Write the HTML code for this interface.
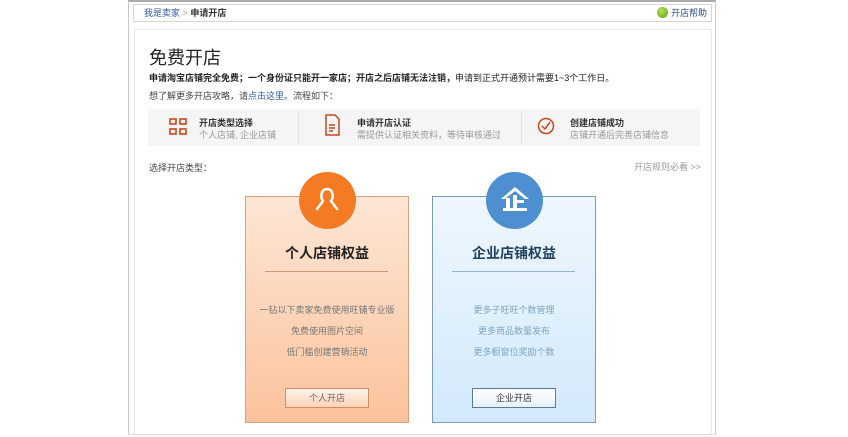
<!DOCTYPE html>
<html><head><meta charset="utf-8"><style>
*{margin:0;padding:0;box-sizing:border-box}
body{width:848px;height:437px;background:#fff;font-family:"Liberation Sans","Noto Sans CJK SC",sans-serif;position:relative;overflow:hidden;color:#333}
.a{position:absolute}
.frame{left:128px;top:0;width:588px;height:435px;border:1px solid #c8c8c8;border-top:2px solid #aaa;border-bottom:1px solid #ddd}
.bc{left:133px;top:4px;width:579px;height:18px;border:1px solid #d5d5d5;font-size:9px;line-height:16px;padding-left:10px}
.panel{left:134px;top:29px;width:578px;height:406px;border:1px solid #e6e6e6;border-bottom:none}
.steps{left:148px;top:109px;width:552px;height:37px;background:#f5f5f5}
.card{top:196px;width:164px;height:227px;border:1px solid #d9a07c}
.t{font-size:9px;white-space:nowrap}
</style></head><body>
<div class="a frame"></div>
<div class="a bc"><span style="color:#2c5f9e">我是卖家</span> <span style="color:#999">&gt;</span> <b>申请开店</b></div>
<div class="a" style="left:657px;top:7px;width:11px;height:11px;border-radius:50%;background:radial-gradient(circle at 40% 35%,#b6e35a,#5a9a10)"></div>
<div class="a t" style="left:671px;top:6px;color:#2c4f7e">开店帮助</div>
<div class="a panel"></div>
<div class="a" style="left:149px;top:44px;font-size:18px;color:#222">免费开店</div>
<div class="a t" style="left:149px;top:71px;color:#222"><b>申请淘宝店铺完全免费；一个身份证只能开一家店；开店之后店铺无法注销，</b>申请到正式开通预计需要1~3个工作日。</div>
<div class="a t" style="left:149px;top:89px;color:#444">想了解更多开店攻略，请<span style="color:#2c5f9e">点击这里</span>。流程如下：</div>
<div class="a steps"></div>
<div class="a" style="left:298px;top:111px;width:1px;height:33px;background:#e2e2e2"></div>
<div class="a" style="left:521px;top:111px;width:1px;height:33px;background:#e2e2e2"></div>
<svg class="a" style="left:169px;top:118px" width="20" height="18" viewBox="0 0 20 18" fill="none" stroke="#c8461b" stroke-width="1.6"><rect x="1" y="1" width="6" height="5"/><rect x="11" y="1" width="6" height="5"/><rect x="1" y="11" width="6" height="5"/><rect x="11" y="11" width="6" height="5"/></svg>
<div class="a t" style="left:199px;top:116px;font-weight:bold;color:#333">开店类型选择</div>
<div class="a t" style="left:199px;top:128px;color:#999">个人店铺, 企业店铺</div>
<svg class="a" style="left:325px;top:114px" width="15" height="22" viewBox="0 0 15 22" fill="none" stroke="#c8461b" stroke-width="1.5"><path d="M1 1H10L14 5V21H1Z"/><path d="M4 11H10M4 14H10M4 17H8"/></svg>
<div class="a t" style="left:357px;top:116px;font-weight:bold;color:#333">申请开店认证</div>
<div class="a t" style="left:357px;top:128px;color:#999">需提供认证相关资料，等待审核通过</div>
<svg class="a" style="left:537px;top:117px" width="18" height="18" viewBox="0 0 18 18" fill="none" stroke="#c8461b" stroke-width="1.5"><circle cx="9" cy="9" r="7.5"/><path d="M5 9L8 12L13 5"/></svg>
<div class="a t" style="left:570px;top:116px;font-weight:bold;color:#333">创建店铺成功</div>
<div class="a t" style="left:570px;top:128px;color:#999">店铺开通后完善店铺信息</div>
<div class="a t" style="left:149px;top:161px;color:#444">选择开店类型：</div>
<div class="a t" style="left:634px;top:160px;color:#999">开店规则必看 &gt;&gt;</div>

<div class="a card" style="left:245px;background:linear-gradient(#fde6d5,#fbc39d)"></div>
<div class="a" style="left:299px;top:172px;width:57px;height:57px;border-radius:50%;background:#f47a24"></div>
<svg class="a" style="left:313px;top:185px" width="28" height="30" viewBox="0 0 28 30" fill="none" stroke="#fff" stroke-width="2.5" stroke-linecap="round"><path d="M10 16C7 12 8 4 14 4C20 4 21 12 18 16L24 24M10 16L4 24"/></svg>
<div class="a" style="left:245px;top:243px;width:164px;text-align:center;font-size:14px;font-weight:bold;color:#222">个人店铺权益</div>
<div class="a" style="left:265px;top:271px;width:123px;height:1px;background:#c99a7c"></div>
<div class="a t" style="left:245px;top:303px;width:164px;text-align:center;color:#777">一钻以下卖家免费使用旺铺专业版</div>
<div class="a t" style="left:245px;top:324px;width:164px;text-align:center;color:#777">免费使用图片空间</div>
<div class="a t" style="left:245px;top:345px;width:164px;text-align:center;color:#777">低门槛创建营销活动</div>
<div class="a t" style="left:285px;top:388px;width:84px;height:20px;border:1px solid #d28e66;background:linear-gradient(#fff3ea,#fcd3b6);text-align:center;line-height:18px;color:#666">个人开店</div>

<div class="a card" style="left:432px;border-color:#7c9bb8;background:linear-gradient(#eef7fe,#d3e9fb)"></div>
<div class="a" style="left:486px;top:172px;width:57px;height:57px;border-radius:50%;background:#4d8fd0"></div>
<svg class="a" style="left:498px;top:184px" width="34" height="30" viewBox="0 0 34 30" fill="#fff"><path d="M17 3L31 15H27L17 7L7 15H3Z"/><rect x="15" y="11" width="4" height="14"/><rect x="19" y="16" width="7" height="3"/><rect x="8" y="14" width="4" height="11"/><rect x="5" y="24" width="24" height="3"/></svg>
<div class="a" style="left:432px;top:243px;width:164px;text-align:center;font-size:14px;font-weight:bold;color:#1f3f5e">企业店铺权益</div>
<div class="a" style="left:452px;top:271px;width:123px;height:1px;background:#93b3cf"></div>
<div class="a t" style="left:432px;top:303px;width:164px;text-align:center;color:#7fa4c6">更多子旺旺个数管理</div>
<div class="a t" style="left:432px;top:324px;width:164px;text-align:center;color:#7fa4c6">更多商品数量发布</div>
<div class="a t" style="left:432px;top:345px;width:164px;text-align:center;color:#7fa4c6">更多橱窗位奖励个数</div>
<div class="a t" style="left:472px;top:388px;width:84px;height:20px;border:1px solid #5c7893;background:linear-gradient(#fff,#e6f1fb);text-align:center;line-height:18px;color:#333">企业开店</div>
</body></html>
